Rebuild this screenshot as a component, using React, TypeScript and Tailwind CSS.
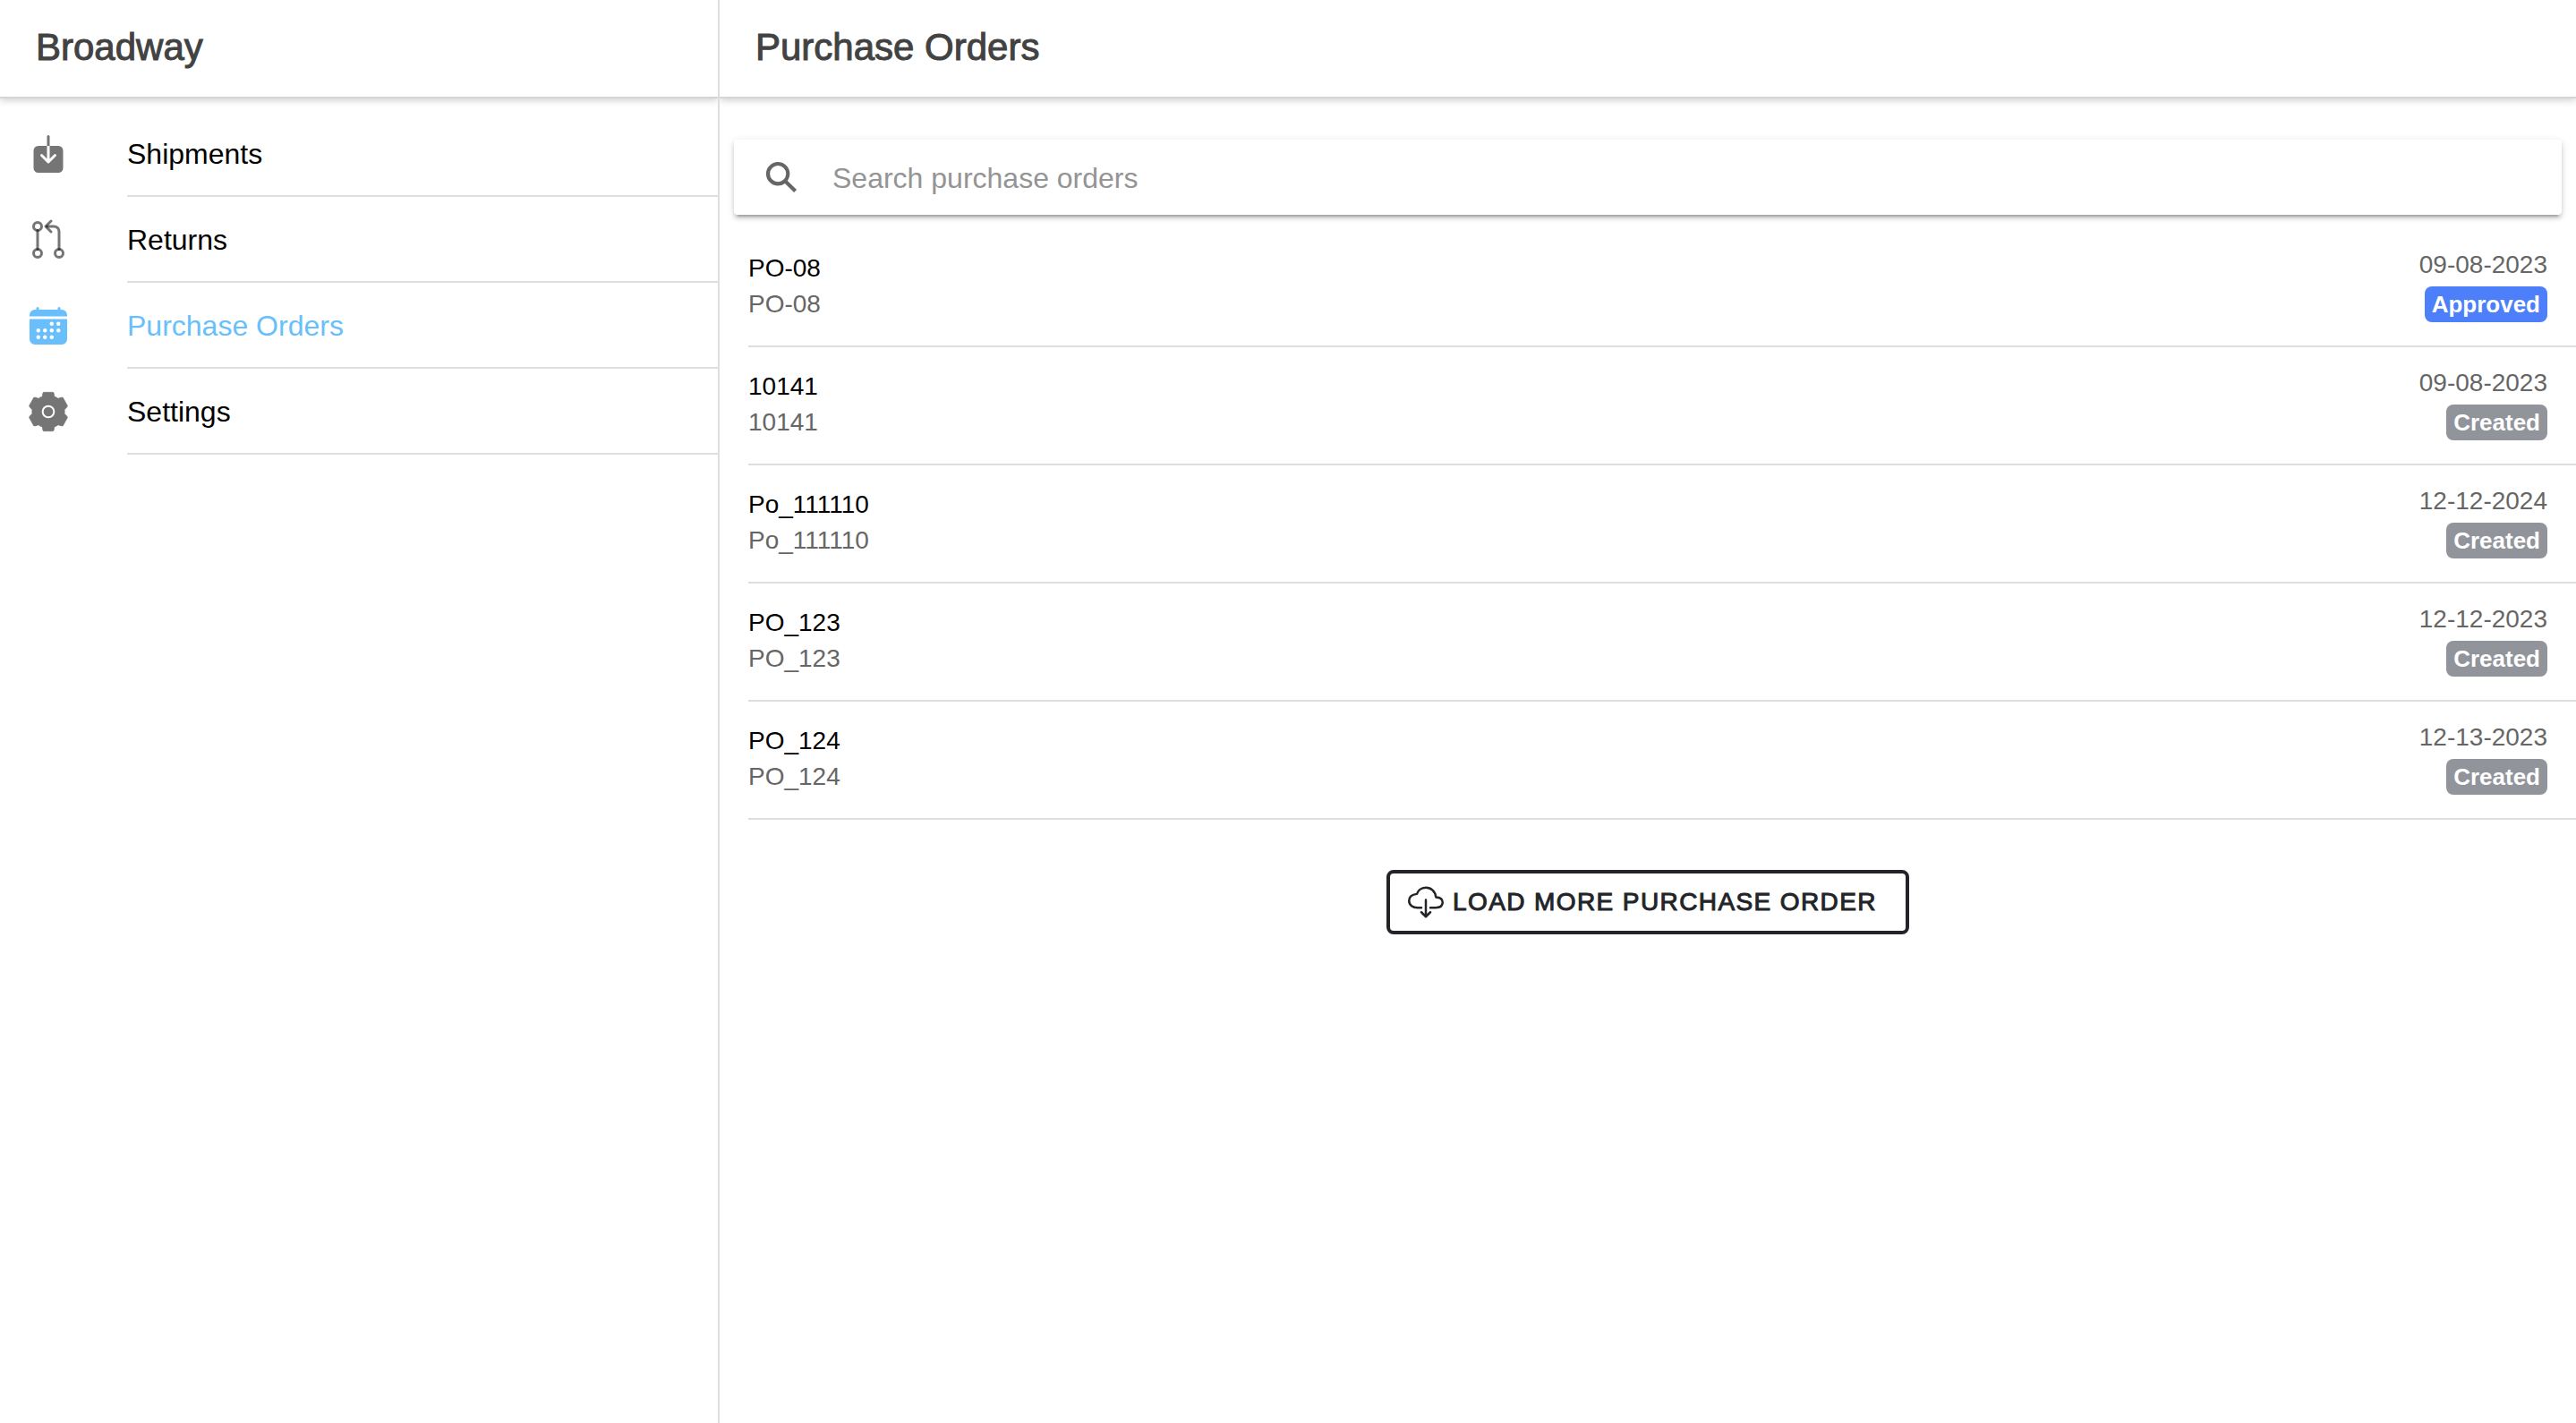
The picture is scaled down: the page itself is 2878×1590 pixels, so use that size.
import React from "react";
import {
  IoCalendar,
  IoCloudDownloadOutline,
  IoDownload,
  IoSearchSharp,
} from "react-icons/io5";

function PullRequestIcon({ className }: { className?: string }) {
  return (
    <svg
      viewBox="0 0 512 512"
      fill="none"
      stroke="currentColor"
      strokeWidth={32}
      strokeLinecap="round"
      strokeLinejoin="round"
      className={className}
      aria-hidden="true"
    >
      <circle cx="128" cy="416" r="48" />
      <path d="M128 144v224M288 160l-64-64 64-64" />
      <circle cx="128" cy="96" r="48" />
      <circle cx="384" cy="416" r="48" />
      <path d="M240 96h84a60 60 0 0 1 60 60v212" />
    </svg>
  );
}

function GearIcon({ className }: { className?: string }) {
  return (
    <svg viewBox="-72 -72 144 144" className={className} aria-hidden="true">
      <path
        d="M-20-51Q-19-65-16-65H16Q19-65 20-51Q27-49 33-44Q46-50 49-47L64-20Q65-16 54-7Q55 0 54 7Q65 16 64 20L49 47Q46 50 33 44Q27 49 20 51Q19 65 16 65H-16Q-19 65-20 51Q-27 49-33 44Q-46 50-49 47L-64 20Q-65 16-54 7Q-55 0-54-7Q-65-16-64-20L-49-47Q-46-50-33-44Q-27-49-20-51Z"
        fill="#757575"
        stroke="#757575"
        strokeWidth={2}
        strokeLinejoin="round"
      />
      <circle r="19" fill="none" stroke="#ffffff" strokeWidth={6} />
    </svg>
  );
}

type IconType = React.ComponentType<{ className?: string }>;

const menu: { label: string; icon: IconType; active?: boolean }[] = [
  { label: "Shipments", icon: IoDownload },
  { label: "Returns", icon: PullRequestIcon },
  { label: "Purchase Orders", icon: IoCalendar, active: true },
  { label: "Settings", icon: GearIcon },
];

const orders = [
  { name: "PO-08", id: "PO-08", date: "09-08-2023", status: "Approved" },
  { name: "10141", id: "10141", date: "09-08-2023", status: "Created" },
  { name: "Po_111110", id: "Po_111110", date: "12-12-2024", status: "Created" },
  { name: "PO_123", id: "PO_123", date: "12-12-2023", status: "Created" },
  { name: "PO_124", id: "PO_124", date: "12-13-2023", status: "Created" },
];

function Header({ title }: { title: string }) {
  return (
    <header className="flex h-[108px] items-center px-10 pb-0.5 shadow-[0_2px_0_#d5d5d5,0_4px_8px_rgba(0,0,0,0.2)]">
      <h1 className="text-[42px] leading-[48px] text-[#424242] [-webkit-text-stroke:1px_#424242]">
        {title}
      </h1>
    </header>
  );
}

function Sidebar() {
  return (
    <aside className="w-[804px] shrink-0 overflow-hidden border-r-2 border-[#dedede]">
      <Header title="Broadway" />
      <nav className="pt-4">
        <ul>
          {menu.map(({ label, icon: Icon, active }) => (
            <li key={label}>
              <a
                href="#"
                aria-current={active ? "page" : undefined}
                className={
                  active
                    ? "flex h-24 items-center pl-[30px] text-[#68bffb]"
                    : "flex h-24 items-center pl-[30px] text-black"
                }
              >
                <Icon
                  className={
                    active
                      ? "size-12 shrink-0 text-[#68bffb]"
                      : "size-12 shrink-0 text-black/54"
                  }
                />
                <span className="ml-16 flex flex-1 items-center self-stretch border-b-2 border-[#dedede] pt-0.5 text-[32px] leading-10">
                  {label}
                </span>
              </a>
            </li>
          ))}
        </ul>
      </nav>
    </aside>
  );
}

function SearchBar() {
  return (
    <label className="mx-4 flex h-[84px] items-center rounded-sm bg-white px-8 shadow-[0_4px_4px_rgba(0,0,0,0.14),0_6px_2px_-4px_rgba(0,0,0,0.2),0_2px_10px_rgba(0,0,0,0.12)]">
      <IoSearchSharp className="size-[42px] shrink-0 text-[#666666]" />
      <input
        type="text"
        aria-label="Search purchase orders"
        placeholder="Search purchase orders"
        className="ml-9 h-full flex-1 bg-transparent pt-0.5 text-[32px] text-black outline-none placeholder:text-[#949494]"
      />
    </label>
  );
}

function OrderRow({ order }: { order: (typeof orders)[number] }) {
  return (
    <li className="ml-8 flex h-[132px] justify-between border-b-2 border-[#dedede] pr-8 text-[28px]">
      <div className="pt-6 leading-10">
        <h2 className="text-black">{order.name}</h2>
        <p className="text-[#666666]">{order.id}</p>
      </div>
      <div className="flex flex-col items-end gap-2 pt-6">
        <p className="leading-8 text-[#666666]">{order.date}</p>
        <span
          className={
            order.status === "Approved"
              ? "rounded-lg bg-[#4d7ffa] px-2 text-[26px] leading-10 font-bold text-white"
              : "rounded-lg bg-[#92949c] px-2 text-[26px] leading-10 font-bold text-white"
          }
        >
          {order.status}
        </span>
      </div>
    </li>
  );
}

export default function App() {
  return (
    <div className="flex min-h-screen bg-white font-['Liberation_Sans',Arial,sans-serif]">
      <Sidebar />
      <main className="min-w-0 flex-1 overflow-hidden">
        <Header title="Purchase Orders" />
        <div className="pt-12">
          <SearchBar />
          <ul className="pt-4">
            {orders.map((order) => (
              <OrderRow key={order.name} order={order} />
            ))}
          </ul>
          <div className="flex justify-center pt-14">
            <button
              type="button"
              className="flex h-[72px] items-center gap-2.5 rounded-lg border-4 border-[#222428] pr-8 pl-5 text-[28px] tracking-wider text-[#222428] uppercase [-webkit-text-stroke:1px_#222428]"
            >
              <IoCloudDownloadOutline className="size-10" />
              Load more purchase order
            </button>
          </div>
        </div>
      </main>
    </div>
  );
}
